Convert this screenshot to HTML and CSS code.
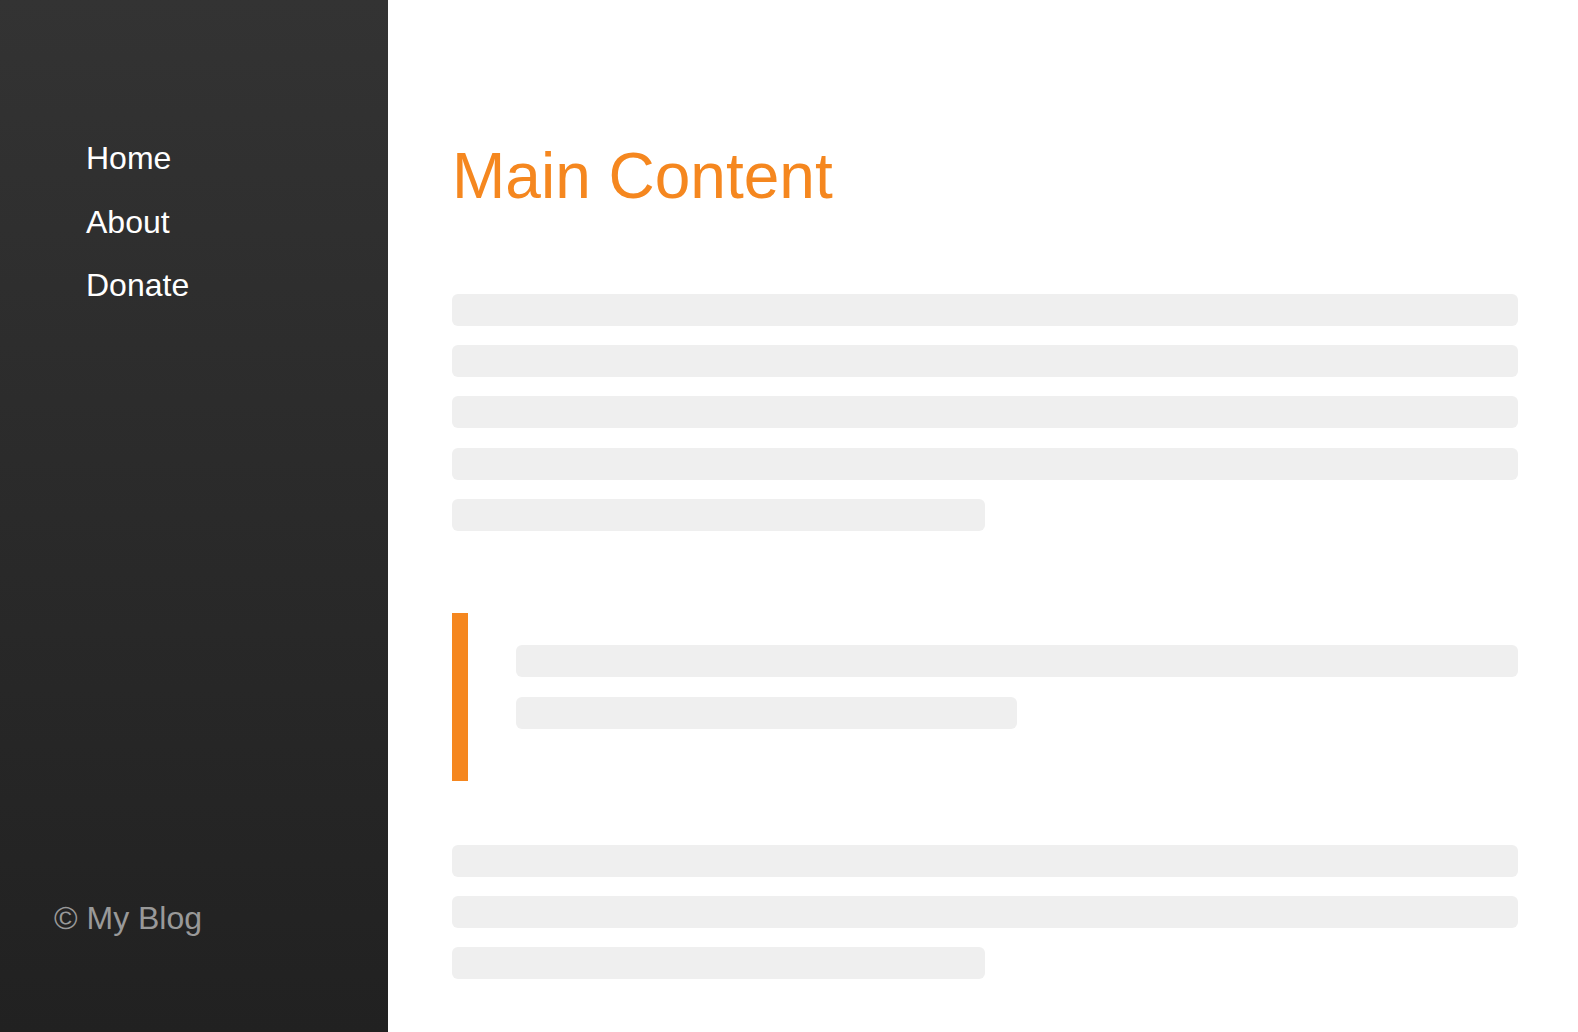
FILE: index.html
```
<!DOCTYPE html>
<html lang="en">
<head>
<meta charset="utf-8">
<title>My Blog</title>
<link rel="stylesheet" href="styles.css">
</head>
<body>
<aside class="sidebar">
  <nav>
    <ul class="nav-list">
      <li><a href="#">Home</a></li>
      <li><a href="#">About</a></li>
      <li><a href="#">Donate</a></li>
    </ul>
  </nav>
  <footer class="sidebar-footer">© My Blog</footer>
</aside>
<main class="main">
  <h1 class="title">Main Content</h1>
  <section class="text-block">
    <div class="line"></div>
    <div class="line"></div>
    <div class="line"></div>
    <div class="line"></div>
    <div class="line half"></div>
  </section>
  <blockquote class="quote">
    <div class="line"></div>
    <div class="line half"></div>
  </blockquote>
  <section class="text-block">
    <div class="line"></div>
    <div class="line"></div>
    <div class="line half"></div>
  </section>
</main>
</body>
</html>
```
FILE: styles.css
```
* { box-sizing: border-box; }
html, body { margin: 0; padding: 0; height: 100%; }
body {
  display: flex;
  font-family: "Liberation Sans", Arial, Helvetica, sans-serif;
  background: #ffffff;
  overflow: hidden;
}
.sidebar {
  width: 388px;
  flex: 0 0 388px;
  height: 100vh;
  background: linear-gradient(to bottom, #333333, #212121);
  display: flex;
  flex-direction: column;
  justify-content: space-between;
  padding: 127px 0 95px 54px;
}
.nav-list {
  list-style: none;
  margin: 0;
  padding: 0 0 0 32px;
}
.nav-list li {
  font-size: 32px;
  line-height: 63.5px;
}
.nav-list a {
  color: #ffffff;
  text-decoration: none;
}
.sidebar-footer {
  color: #999999;
  font-size: 32px;
  line-height: normal;
}
.main {
  flex: 1;
  padding: 138px 60px 0 64px;
}
.title {
  margin: 0 0 79px;
  font-size: 64px;
  line-height: 77px;
  font-weight: normal;
  color: #f5871f;
}
.line {
  height: 32px;
  background: #efefef;
  border-radius: 6px;
  margin-bottom: 19.2px;
}
.line.half { width: 50%; }
.quote {
  margin: 82px 0 64px;
  padding: 32px 0 32px 48px;
  border-left: 16px solid #f5871f;
}
.quote .line { margin-bottom: 20px; }
```
